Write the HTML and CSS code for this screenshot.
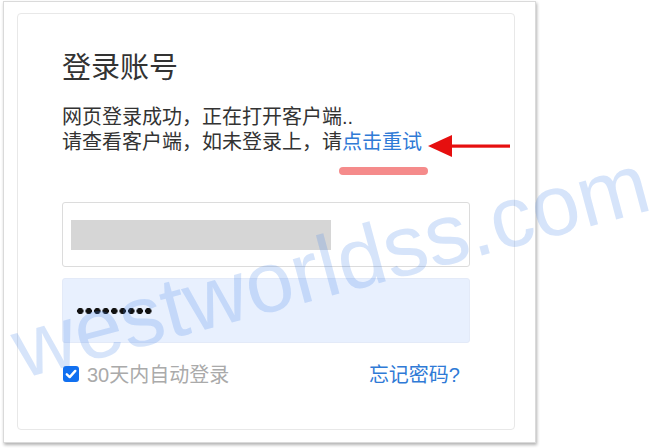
FILE: index.html
```html
<!DOCTYPE html>
<html lang="zh-CN">
<head>
    <meta charset="UTF-8">
    <meta name="viewport" content="width=device-width, initial-scale=1.0">
    <title>登录账号</title>
    <link rel="stylesheet" href="styles.css">
</head>
<body>
    <div class="window">
        <div class="card">
            <h1 class="title">登录账号</h1>
            <p class="intro">
                网页登录成功，正在打开客户端..<br>
                请查看客户端，如未登录上，请<a class="retry" href="#">点击重试<span class="mark"></span></a>
            </p>
            <form class="login-form">
                <div class="field">
                    <span class="redacted"></span>
                </div>
                <div class="field field-auto">
                    <span class="dots"></span>
                </div>
                <div class="form-row">
                    <label class="remember">
                        <span class="check">
                            <svg width="16" height="16" viewBox="0 0 16 16">
                                <rect width="16" height="16" rx="3" fill="#1170f0"/>
                                <path d="M3.8 8.3 L6.7 11.1 L12.3 4.9" fill="none" stroke="#fff" stroke-width="2.4" stroke-linecap="round" stroke-linejoin="round"/>
                            </svg>
                        </span>
                        30天内自动登录
                    </label>
                    <a class="forgot" href="#">忘记密码?</a>
                </div>
            </form>
        </div>
    </div>

    <!-- annotation arrow -->
    <svg class="arrow" width="86" height="26" viewBox="0 0 86 26">
        <polygon points="2,13 26,2 26,24" fill="#e60f0f"/>
        <rect x="24" y="11.5" width="60" height="3.2" fill="#e60f0f"/>
    </svg>

    <div class="watermark">westworldss.com</div>
</body>
</html>
```

FILE: styles.css
```css
body {
    margin: 0;
    height: 448px;
    overflow: hidden;
    position: relative;
    background: #fff;
    font-family: "Liberation Sans", "Noto Sans CJK SC", sans-serif;
    color: #333;
}
.window {
    margin: 1px 0 0 3px;
    width: 533px;
    height: 442px;
    box-sizing: border-box;
    padding: 11px 0 0 13px;
    border: 1px solid #dadada;
    box-shadow: 1px 2px 3px rgba(0, 0, 0, 0.3);
}
.card {
    width: 498px;
    height: 417px;
    box-sizing: border-box;
    padding: 34px 44px 0 44px;
    border: 1px solid #e8e8e8;
    border-radius: 4px;
}
.title {
    margin: 0 0 17px;
    font-size: 29px;
    line-height: 40px;
    font-weight: 400;
    color: #333;
}
.intro {
    margin: 0;
    font-size: 20px;
    line-height: 25px;
}
.retry {
    position: relative;
    color: #2f7ad6;
    text-decoration: none;
}
.mark {
    position: absolute;
    left: -3px;
    right: -6px;
    top: 36px;
    height: 8px;
    border-radius: 4px;
    background: #f58b8b;
}
.login-form {
    margin-top: 47px;
}
.field {
    height: 65px;
    box-sizing: border-box;
    padding: 0 8px;
    margin-bottom: 11px;
    display: flex;
    align-items: center;
    border: 1px solid #dcdcdc;
    border-radius: 3px;
}
.field-auto {
    background: #e8f0fe;
    border-color: #e3eaf8;
}
.redacted {
    width: 260px;
    height: 30px;
    background: #d6d6d6;
}
.dots {
    margin-left: 5px;
    width: 77px;
    height: 8px;
    background: radial-gradient(circle, #111 2.9px, transparent 3.4px) 0 0 / 8.5px 8px repeat-x;
}
.form-row {
    margin-top: 18px;
    height: 25px;
    display: flex;
    align-items: center;
    justify-content: space-between;
    font-size: 20px;
}
.remember {
    display: flex;
    align-items: center;
    gap: 8px;
    margin-left: 1px;
    color: #aaa;
}
.check {
    display: flex;
}
.forgot {
    padding-right: 10px;
    color: #2f7ad6;
    text-decoration: none;
}
.arrow {
    position: absolute;
    left: 426px;
    top: 133px;
}
.watermark {
    position: absolute;
    left: 3px;
    top: 222px;
    font-size: 86px;
    line-height: 86px;
    white-space: nowrap;
    color: rgba(70, 130, 230, 0.22);
    transform: rotate(-15deg);
    pointer-events: none;
}
```
